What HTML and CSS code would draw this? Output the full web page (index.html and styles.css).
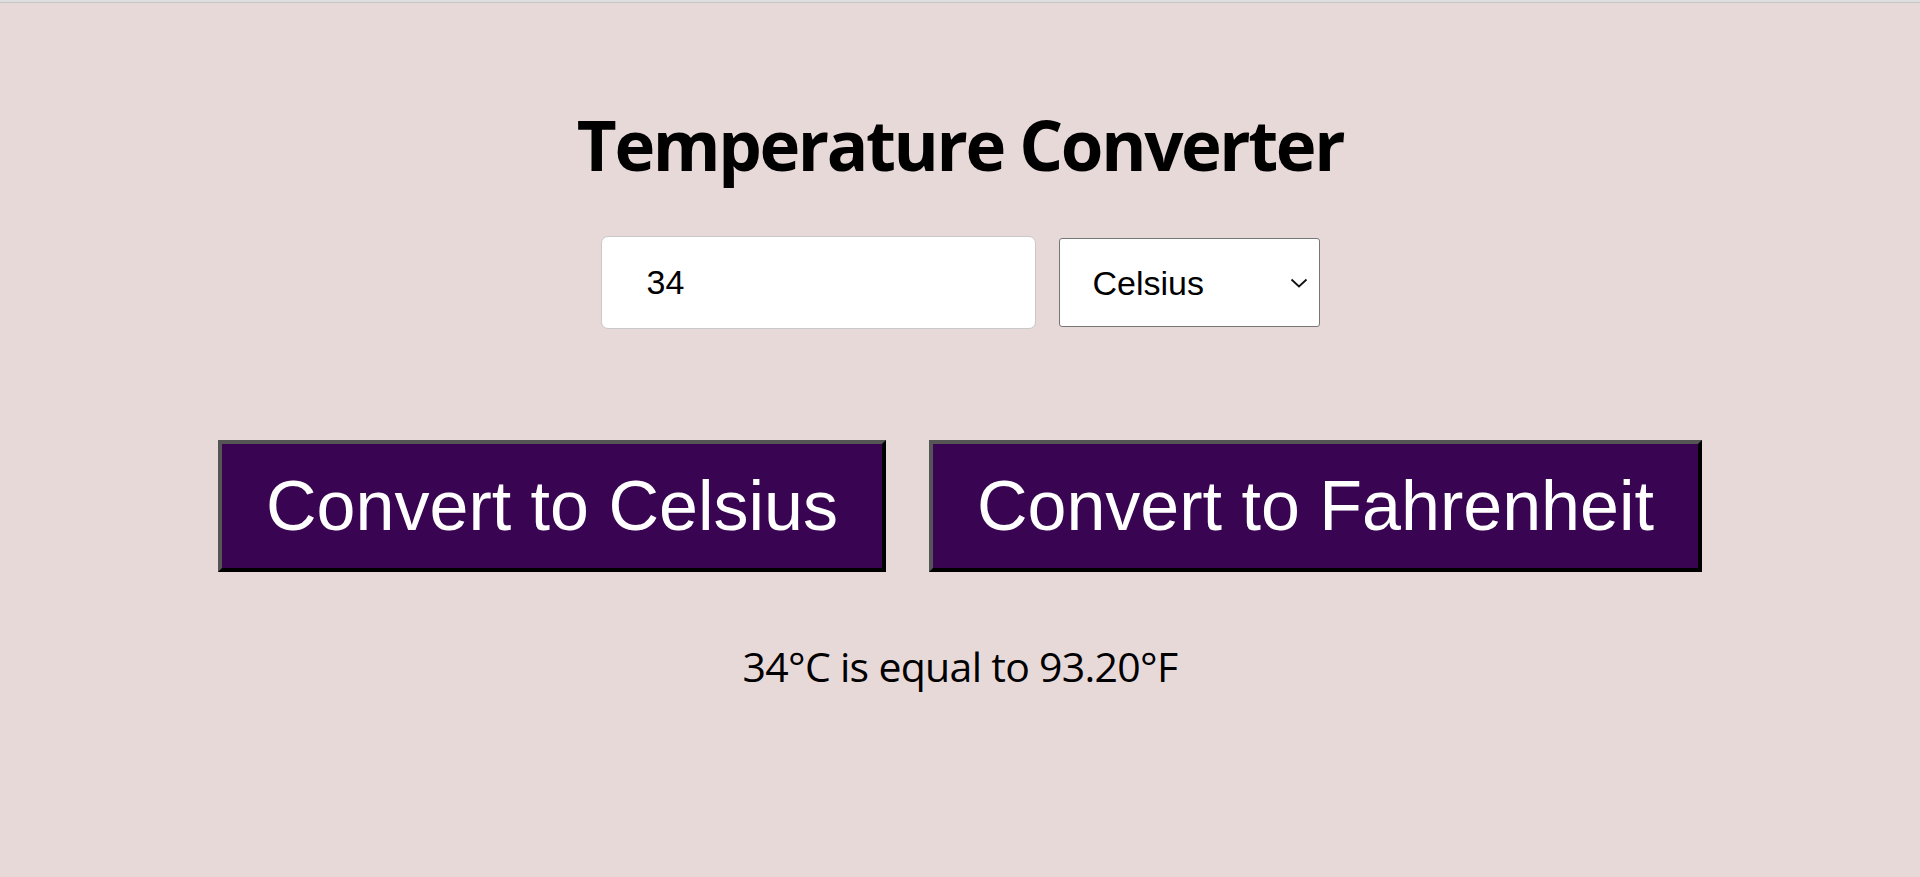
FILE: index.html
```html
<!DOCTYPE html>
<html lang="en">
<head>
<meta charset="utf-8">
<title>Temperature Converter</title>
<link rel="stylesheet" href="styles.css">
</head>
<body>
<div class="topbar"></div>
<main class="converter">
  <h1 class="title">Temperature Converter</h1>
  <div class="inputs">
    <input class="temp-input" type="number" value="34">
    <span class="select-wrap">
      <select class="unit-select">
        <option>Celsius</option>
        <option>Fahrenheit</option>
      </select>
      <svg class="chevron" width="18" height="10" viewBox="0 0 18 10"><path d="M1.5 1.5 L9 8.5 L16.5 1.5" fill="none" stroke="#111" stroke-width="1.8"/></svg>
    </span>
  </div>
  <div class="buttons">
    <button class="btn">Convert to Celsius</button>
    <button class="btn">Convert to Fahrenheit</button>
  </div>
  <p class="result">34°C is equal to 93.20°F</p>
</main>
</body>
</html>
```

FILE: styles.css
```css
html, body {
  margin: 0;
  padding: 0;
}
body {
  background: #e8d9d9;
  min-height: 877px;
  font-family: "Open Sans", "Noto Sans", sans-serif;
  color: #000;
}
.topbar {
  height: 2px;
  background: #dedede;
  border-bottom: 1px solid #c6c6c6;
}
.converter {
  display: flex;
  flex-direction: column;
  align-items: center;
  padding-top: 106px;
}
.title {
  margin: 0;
  font-family: "Open Sans", sans-serif;
  font-weight: 700;
  font-size: 69px;
  line-height: 70px;
  letter-spacing: -2.4px;
}
.inputs {
  display: flex;
  align-items: center;
  gap: 23px;
  margin-top: 57px;
}
.temp-input {
  box-sizing: border-box;
  width: 435px;
  height: 93px;
  border: 1px solid #c9c9c9;
  border-radius: 7px;
  background: #fff;
  padding: 0 0 0 45px;
  font-family: "Liberation Sans", Arial, sans-serif;
  font-size: 34px;
  color: #000;
  outline: none;
  -moz-appearance: textfield;
}
.temp-input::-webkit-inner-spin-button,
.temp-input::-webkit-outer-spin-button {
  -webkit-appearance: none;
  margin: 0;
}
.select-wrap {
  position: relative;
  display: inline-flex;
}
.unit-select {
  box-sizing: border-box;
  width: 261px;
  height: 89px;
  border: 1px solid #767676;
  border-radius: 3px;
  background: #fff;
  padding: 0 0 0 33px;
  font-family: "Liberation Sans", Arial, sans-serif;
  font-size: 34px;
  color: #000;
  -webkit-appearance: none;
  appearance: none;
}
.chevron {
  position: absolute;
  right: 12px;
  top: 40px;
  pointer-events: none;
}
.buttons {
  display: flex;
  gap: 43px;
  margin-top: 111px;
}
.btn {
  box-sizing: border-box;
  height: 132px;
  padding: 0 44px;
  background: #390451;
  color: #fff;
  font-family: "Liberation Sans", Arial, sans-serif;
  font-size: 70px;
  line-height: 1;
  border-style: solid;
  border-width: 4px;
  border-color: #555 #000 #000 #555;
  border-radius: 0;
}
.result {
  margin: 73px 0 0;
  font-family: "Open Sans", sans-serif;
  font-size: 41px;
  line-height: 42px;
  letter-spacing: -0.7px;
}
```
